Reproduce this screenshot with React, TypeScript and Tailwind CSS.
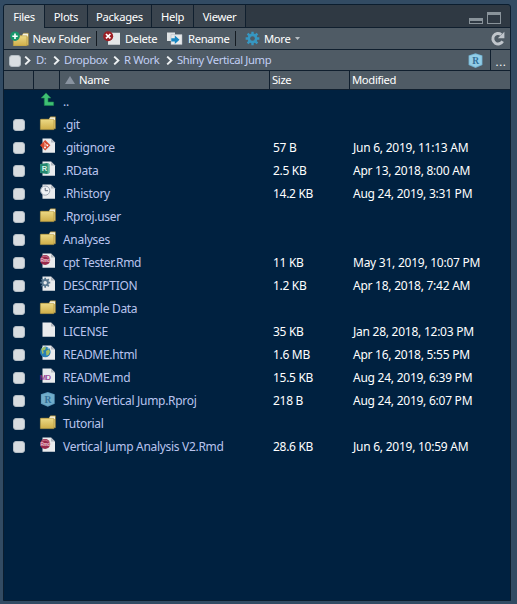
import type { ReactNode } from "react";

type Kind = "up" | "folder" | "git" | "rdata" | "history" | "rmd" | "gear" | "file" | "html" | "md" | "rproj";

interface Entry {
  kind: Kind;
  name: string;
  size?: string;
  date?: string;
}

const entries: Entry[] = [
  { kind: "up", name: ".." },
  { kind: "folder", name: ".git" },
  { kind: "git", name: ".gitignore", size: "57 B", date: "Jun 6, 2019, 11:13 AM" },
  { kind: "rdata", name: ".RData", size: "2.5 KB", date: "Apr 13, 2018, 8:00 AM" },
  { kind: "history", name: ".Rhistory", size: "14.2 KB", date: "Aug 24, 2019, 3:31 PM" },
  { kind: "folder", name: ".Rproj.user" },
  { kind: "folder", name: "Analyses" },
  { kind: "rmd", name: "cpt Tester.Rmd", size: "11 KB", date: "May 31, 2019, 10:07 PM" },
  { kind: "gear", name: "DESCRIPTION", size: "1.2 KB", date: "Apr 18, 2018, 7:42 AM" },
  { kind: "folder", name: "Example Data" },
  { kind: "file", name: "LICENSE", size: "35 KB", date: "Jan 28, 2018, 12:03 PM" },
  { kind: "html", name: "README.html", size: "1.6 MB", date: "Apr 16, 2018, 5:55 PM" },
  { kind: "md", name: "README.md", size: "15.5 KB", date: "Aug 24, 2019, 6:39 PM" },
  { kind: "rproj", name: "Shiny Vertical Jump.Rproj", size: "218 B", date: "Aug 24, 2019, 6:07 PM" },
  { kind: "folder", name: "Tutorial" },
  { kind: "rmd", name: "Vertical Jump Analysis V2.Rmd", size: "28.6 KB", date: "Jun 6, 2019, 10:59 AM" },
];

const tabs = [
  { label: "Files", cls: "w-[40px] bg-[#4f5b65]" },
  { label: "Plots", cls: "w-[42px] bg-[#3a444e] border-b" },
  { label: "Packages", cls: "w-[63px] bg-[#3a444e] border-b" },
  { label: "Help", cls: "w-[41px] bg-[#3a444e] border-b" },
  { label: "Viewer", cls: "w-[51px] bg-[#3a444e] border-b" },
];

function Folder() {
  return (
    <g transform="translate(0 .8)">
      <path d="M1 3.5 9 3.5 10.5 1H15.4V13H1z" fill="#d9c06a" stroke="#a98b3b" strokeWidth=".5" />
      <path d="M10 1.6h5v2.6h-6z" fill="#f4f1e2" />
      <path d="M.4 3.6H13.8V13.8H.4z" fill="url(#folderFill)" stroke="#b59a43" strokeWidth=".6" />
    </g>
  );
}

function Page() {
  return (
    <>
      <path d="M2.5.5H11l4 4V14.8H2.5z" fill="#e9ebed" />
      <path d="M11 .5v4h4z" fill="#b3b9c0" />
    </>
  );
}

function Hex({ face, edge }: { face: string; edge: string }) {
  return (
    <>
      <path d="M7.5.3 14.4 2.4V12L7.5 15 .6 12V2.4z" fill={edge} />
      <path d="M7.5 1.2 13.6 3V11.3L7.5 14 1.4 11.3V3z" fill={face} />
      <text x="7.6" y="10.8" textAnchor="middle" fontSize="9.5" fontWeight="700" fill="#326f98" fontFamily="Liberation Serif, serif">R</text>
    </>
  );
}

function Cog({ x, y, color, hole, scale }: { x: number; y: number; color: string; hole: string; scale: number }) {
  return (
    <g transform={`translate(${x} ${y}) scale(${scale})`}>
      <g stroke={color} strokeWidth="2.4">
        <path d="M0-7V7M-7 0H7M-5-5 5 5M-5 5 5-5" />
      </g>
      <circle r="5" fill={color} />
      <circle r="2.4" fill={hole} />
    </g>
  );
}

function FileIcon({ kind }: { kind: Kind }) {
  const art: Record<Kind, ReactNode> = {
    up: <path d="M6 .9 10.8 6H8v4h5.6v3.4H4.3V6H1.2z" fill="#3fbf74" stroke="#1f8c4f" strokeWidth=".6" />,
    folder: <Folder />,
    git: (
      <>
        <Page />
        <path d="M5.2 2 10.4 7.2 5.2 12.4 0 7.2z" fill="#d8492f" />
        <path d="M3.8 4.3 7.3 7.4M5 5.4V10" stroke="#f7d5cc" strokeWidth=".8" />
        <circle cx="5" cy="9.6" r=".9" fill="#fff" />
        <circle cx="7.4" cy="7.4" r=".9" fill="#fff" />
      </>
    ),
    rdata: (
      <>
        <Page />
        <path d="M0 3 7 2 9.4 3V12L7 13 0 12z" fill="#23866f" />
        <path d="M7.6 2.2 9.4 3V12L7.6 12.8z" fill="#62b9a2" />
        <text x="4.2" y="10.3" textAnchor="middle" fontSize="7.5" fontWeight="700" fill="#dff5ec" fontFamily="Liberation Sans, sans-serif">R</text>
      </>
    ),
    history: (
      <>
        <Page />
        <circle cx="5.2" cy="6.6" r="4.6" fill="#eef1f4" stroke="#99a3b0" strokeWidth="1" />
        <path d="M5.2 3.9V6.7H8" fill="none" stroke="#536071" strokeWidth=".9" />
      </>
    ),
    rmd: (
      <>
        <Page />
        <circle cx="5.1" cy="7" r="5.1" fill="#98294b" />
        <path d="M1.5 4.4a5 4 0 0 1 7 0" stroke="#c97088" fill="none" />
        <text x="5.1" y="8.7" textAnchor="middle" fontSize="4.5" fontWeight="700" fill="#f0cbd5" fontFamily="Liberation Sans, sans-serif">Rmd</text>
      </>
    ),
    gear: (
      <>
        <Page />
        <Cog x={5.2} y={6.7} color="#58778f" hole="#e7eaed" scale={0.72} />
      </>
    ),
    file: <Page />,
    html: (
      <>
        <Page />
        <circle cx="5.3" cy="6.9" r="5.3" fill="#277fb5" />
        <path d="M1.2 4 3.2 2l3 .2L5 5 3 5.6 3.8 8 2.4 9zM6 6l3-1.8 1 2.8-1.6 3-2 .6z" fill="#a3bd63" />
        <path d="M2 3 3.5 2M7.5 2.7 8.7 4" stroke="#c7e9f5" strokeWidth=".8" />
      </>
    ),
    md: (
      <>
        <Page />
        <text x="-.3" y="11.8" fontSize="7.5" textLength="11" lengthAdjust="spacingAndGlyphs" fill="#8e2e8d" stroke="#8e2e8d" strokeWidth=".2" fontFamily="Liberation Sans, sans-serif">MD</text>
      </>
    ),
    rproj: <g transform="translate(.3 .8)"><Hex face="#71adca" edge="#5c9abd" /></g>,
  };
  return <svg viewBox="0 0 15.5 15" className="h-[15px] w-[15.5px] shrink-0 overflow-visible">{art[kind]}</svg>;
}

function Chevron() {
  return (
    <svg viewBox="0 0 7 9" className="h-[9px] w-[7px] shrink-0">
      <path d="M1.2.6 5.4 4.5 1.2 8.4" fill="none" stroke="#edf0f2" strokeWidth="1.9" />
    </svg>
  );
}

function Divider() {
  return <div className="h-[15px] w-px shrink-0 bg-[#141b22]" />;
}

export default function App() {
  return (
    <div className="h-[604px] w-[517px] overflow-hidden bg-[#324b63] pt-1 pl-[3px] font-['Noto_Sans','Open_Sans',sans-serif] text-[11.25px] leading-[16px] tracking-[-0.34px] whitespace-nowrap text-white">
      <svg className="absolute h-0 w-0">
        <defs>
          <linearGradient id="folderFill" x2="0" y2="1">
            <stop stopColor="#ecd985" />
            <stop offset="1" stopColor="#cfae48" />
          </linearGradient>
        </defs>
      </svg>
      <div className="flex h-[597px] w-[508px] flex-col overflow-hidden rounded-t-[3px] border border-[#0b1d2e] bg-[#002140]">
        <div className="flex h-[23px] shrink-0 bg-[#2f3943]">
          {tabs.map((t) => (
            <div key={t.label} className={`${t.cls} box-content flex h-[22px] shrink-0 items-center justify-center border-r border-[#101f2e] first:h-[23px]`}>
              <span className="pt-px">{t.label}</span>
            </div>
          ))}
          <div className="flex h-full grow items-end justify-end gap-1 border-b border-[#101f2e] pr-[9px] pb-[3px]">
            <div className="h-[6px] w-[14px] border border-t-3 border-[#89939a]" />
            <div className="h-[12px] w-[14px] border border-t-3 border-[#89939a]" />
          </div>
        </div>

        <div className="flex h-[22px] shrink-0 items-center border-b border-[#101f2e] bg-[#4f5b65] pl-[6px]">
          <svg viewBox="0 0 19 15" className="h-[15px] w-[19px] shrink-0">
            <g transform="translate(3 .4)"><Folder /></g>
            <circle cx="5" cy="5.2" r="4.8" fill="#17956a" />
            <path d="M5 2.5v5.4M2.3 5.2h5.4" stroke="#fff" strokeWidth="1.6" />
          </svg>
          <span className="ml-[3.5px] w-[63.5px] pt-px tracking-[-0.2px]">New Folder</span>
          <Divider />
          <svg viewBox="0 0 18 15" className="ml-[6px] h-[15px] w-[18px] shrink-0">
            <path d="M5 1.8h12v12H5z" fill="#e3e6e8" />
            <circle cx="5.2" cy="5.2" r="5" fill="#9c1f25" />
            <path d="m3 3 4.4 4.4M7.4 3 3 7.4" stroke="#fff" strokeWidth="1.7" />
          </svg>
          <span className="ml-[4px] w-[41px] pt-px">Delete</span>
          <svg viewBox="0 0 18 15" className="h-[15px] w-[18px] shrink-0">
            <path d="M1 1.6h8v8.4H1z" fill="#dfe3e5" />
            <path d="M5 3.6h11v10H5z" fill="#e8eaeb" stroke="#aeb7be" strokeWidth=".5" />
            <path d="M5.3 7.2H8.8V4.6l4.7 4.2-4.7 4.2V10.4H5.3z" fill="#1686c2" />
          </svg>
          <span className="ml-[4px] w-[47px] pt-px">Rename</span>
          <Divider />
          <svg viewBox="0 0 15 15" className="ml-[9px] h-[15px] w-[15px] shrink-0"><Cog x={7.5} y={7.5} color="#3697c2" hole="#4f5b65" scale={0.98} /></svg>
          <span className="ml-[4px] w-[31px] pt-px">More</span>
          <svg viewBox="0 0 5 3" className="h-[3px] w-[5px]"><path d="M0 0h5L2.5 3z" fill="#b9c0c5" /></svg>
          <svg viewBox="0 0 15 15" className="ml-auto mr-[5px] h-[15px] w-[15px]">
            <path d="M12.6 10.2a5.2 5.2 0 1 1-1.4-6.6" fill="none" stroke="#c0c6cc" strokeWidth="3" />
            <path d="M14.4.8v6.4H7.8z" fill="#c0c6cc" />
          </svg>
        </div>

        <div className="flex h-[21px] shrink-0 items-center border-b border-[#101f2e] bg-[#4f5b65] pl-[4.5px] tracking-[-0.36px] text-[#c2cff4]">
          <div className="mr-[3.5px] mt-[2px] h-[12px] w-[12px] shrink-0 rounded-[3px] border border-[#b5bec5] bg-[#d9dee2]" />
          <Chevron />
          <span className="ml-[5px] w-[17px]">D:</span>
          <Chevron />
          <span className="ml-[4px] w-[49px] tracking-[-0.3px]">Dropbox</span>
          <Chevron />
          <span className="ml-[4px] w-[42px]">R Work</span>
          <Chevron />
          <span className="ml-[4px]">Shiny Vertical Jump</span>
          <svg viewBox="0 0 15 15" className="ml-auto mr-[7px] h-[15px] w-[15px]"><Hex face="#93cde6" edge="#73b4d4" /></svg>
          <div className="flex h-full w-[20px] items-center justify-center border-l border-[#101f2e] pt-[3px] pl-px tracking-[.7px] text-white">...</div>
        </div>

        <div className="flex h-[19px] shrink-0 items-center border-b border-[#101f2e] bg-[#4f5b65]">
          <div className="h-full w-[30px] border-r border-[#101f2e]" />
          <div className="h-full w-[26px] border-r border-[#101f2e]" />
          <div className="flex h-full w-[210px] items-center border-r border-[#101f2e] pl-[5px]">
            <svg viewBox="0 0 10 8" className="mr-[4px] h-[8px] w-[10px]"><path d="M5 0 10 8H0z" fill="#8993a0" /></svg>
            <span>Name</span>
          </div>
          <div className="flex h-full w-[80px] items-center border-r border-[#101f2e] pl-[2px]">Size</div>
          <div className="pl-[2px]">Modified</div>
        </div>

        <div className="flex flex-col text-[12px] tracking-[-0.3px]">
          {entries.map((e) => (
            <div key={e.name} className="flex h-[23px] items-center">
              <div className="flex w-[36px] pt-px pl-[9px]">
                {e.kind !== "up" && <div className="h-[12px] w-[12px] rounded-[3px] border border-[#b3bdc5] bg-[#d7dce0]" />}
              </div>
              <div className="mb-[4px] w-[23px]"><FileIcon kind={e.kind} /></div>
              <div className="w-[210px] text-[#b9c4ee]">{e.name}</div>
              <div className="w-[80px]">{e.size}</div>
              <div className="tracking-[-0.25px]">{e.date}</div>
            </div>
          ))}
        </div>
      </div>
    </div>
  );
}
